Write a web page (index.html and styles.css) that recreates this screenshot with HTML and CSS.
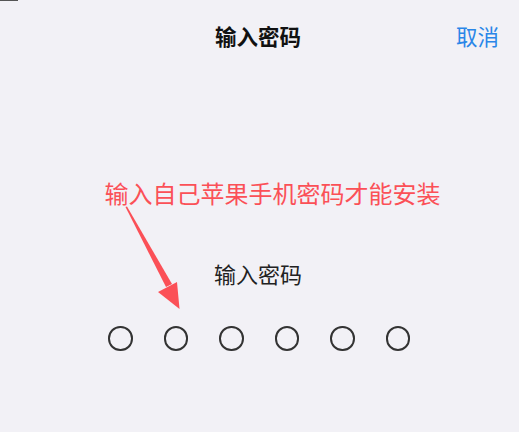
FILE: index.html
```html
<!DOCTYPE html>
<html lang="zh">
<head>
<meta charset="utf-8">
<link rel="stylesheet" href="styles.css">
</head>
<body>
<div class="screen">
  <div class="topline"></div>
  <header class="nav">
    <div class="nav-title">输入密码</div>
    <div class="nav-cancel">取消</div>
  </header>
  <div class="note">输入自己苹果手机密码才能安装</div>
  <div class="prompt">输入密码</div>
  <div class="dots">
    <span class="dot"></span><span class="dot"></span><span class="dot"></span>
    <span class="dot"></span><span class="dot"></span><span class="dot"></span>
  </div>
  <svg class="arrow" width="519" height="432" viewBox="0 0 519 432">
    <polygon points="125.5,207 127,206.5 172,284 166,287" fill="#fb5057"/>
    <polygon points="158,292 177,282 179.5,309" fill="#fb5057"/>
  </svg>
</div>
</body>
</html>
```
FILE: styles.css
```css
html, body {
  margin: 0;
  padding: 0;
  background: #f2f1f6;
}
.screen {
  position: relative;
  width: 519px;
  height: 432px;
  overflow: hidden;
  font-family: "Noto Sans CJK SC", "Noto Sans", sans-serif;
}
.topline {
  position: absolute;
  left: 0;
  top: 0;
  width: 18px;
  height: 1px;
  background: #555;
}
.nav {
  position: relative;
  height: 74px;
  display: flex;
  align-items: center;
  justify-content: center;
}
.nav-title {
  font-size: 21.5px;
  font-weight: 700;
  color: #111;
  line-height: 1;
  margin-left: -3px;
  margin-top: -2px;
}
.nav-cancel {
  position: absolute;
  right: 20px;
  top: 25px;
  font-size: 21.5px;
  color: #2a86e8;
  line-height: 1;
}
.note {
  margin-top: 106px;
  padding-left: 26px;
  text-align: center;
  font-size: 24px;
  line-height: 26px;
  color: #fb5057;
}
.prompt {
  margin-top: 55px;
  padding-right: 3px;
  text-align: center;
  font-size: 22px;
  line-height: 24px;
  color: #222;
}
.dots {
  margin-top: 41px;
  display: flex;
  justify-content: center;
  gap: 31px;
  padding-right: 1px;
}
.dot {
  box-sizing: border-box;
  width: 24.5px;
  height: 24.5px;
  border: 2px solid #333;
  border-radius: 50%;
}
.arrow {
  position: absolute;
  left: 0;
  top: 0;
}
```
